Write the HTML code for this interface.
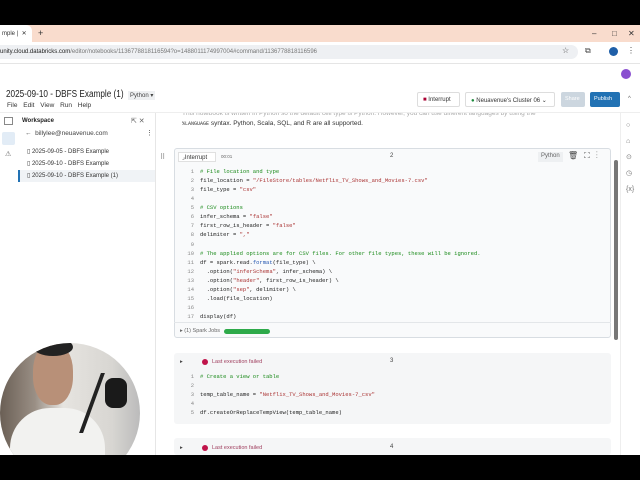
<!DOCTYPE html>
<html><head><style>
*{box-sizing:border-box;margin:0;padding:0}
body{width:640px;height:480px;overflow:hidden;background:#000;font-family:"Liberation Sans",sans-serif;position:relative}
.a{position:absolute;white-space:nowrap}
.code{font-family:"Liberation Mono",monospace;font-size:5.5px;color:#222;white-space:pre}
.ln{color:#888;display:inline-block;width:14px;text-align:right;margin-right:6px}
.c{color:#1a8a1a}.s{color:#a33}.f{color:#2456b0}
</style></head><body>
<div class="a" style="left:0;top:25px;width:640px;height:17px;background:#f9dccd"></div>
<div class="a" style="left:0;top:25px;width:32px;height:17px;background:#fff;border-radius:0 6px 0 0;font-size:6px;padding:5px 2px;color:#333">mple | &nbsp;✕</div>
<div class="a" style="left:38px;top:28px;font-size:9px;color:#333">+</div>
<div class="a" style="left:592px;top:29px;font-size:8px;color:#333">–</div>
<div class="a" style="left:612px;top:29px;font-size:8px;color:#333">□</div>
<div class="a" style="left:628px;top:29px;font-size:8px;color:#333">✕</div>
<div class="a" style="left:0;top:42px;width:640px;height:21px;background:#fff"></div>
<div class="a" style="left:0;top:45px;width:578px;height:14px;background:#eef0f3;border-radius:0 7px 7px 0;font-size:6px;padding:4px 0;color:#777"><span style="color:#222">unity.cloud.databricks.com</span>/editor/notebooks/1136778818116594?o=1488011174997004#command/1136778818116596</div>
<div class="a" style="left:562px;top:46px;font-size:8px;color:#444">☆</div>
<div class="a" style="left:585px;top:46px;font-size:8px;color:#444">⧉</div>
<div class="a" style="left:609px;top:47px;width:9px;height:9px;border-radius:50%;background:#1f5fa8"></div>
<div class="a" style="left:627px;top:46px;font-size:8px;color:#444">⋮</div>
<div class="a" style="left:0;top:63px;width:640px;height:392px;background:#fff"></div>
<div class="a" style="left:0;top:63px;width:640px;height:1px;background:#e5e5e5"></div>
<div class="a" style="left:621px;top:69px;width:10px;height:10px;border-radius:50%;background:#8a4fd0"></div>
<div class="a" style="left:6px;top:89px;font-size:10px;color:#222;transform:scaleX(0.82);transform-origin:left">2025-09-10 - DBFS Example (1)</div>
<div class="a" style="left:128px;top:91px;font-size:6px;color:#444;background:#eef0f2;padding:1px 2px">Python ▾</div>
<div class="a" style="left:7px;top:102px;font-size:6.5px;color:#333;word-spacing:4px">File Edit View Run Help</div>
<div class="a" style="left:417px;top:92px;width:43px;height:15px;border:1px solid #ddd;border-radius:2px;font-size:6px;padding:4px 5px;color:#333"><span style="color:#a03">■</span> Interrupt</div>
<div class="a" style="left:465px;top:92px;width:90px;height:15px;border:1px solid #ddd;border-radius:2px;font-size:6px;padding:4px 5px;color:#333"><span style="color:#1c8a3c">●</span> Neuavenue's Cluster 06 ⌄</div>
<div class="a" style="left:561px;top:92px;width:24px;height:15px;background:#ccd6df;border-radius:2px;font-size:5.5px;padding:4px 4px;color:#fff">Share</div>
<div class="a" style="left:590px;top:92px;width:30px;height:15px;background:#2272b4;border-radius:2px;font-size:5.5px;padding:4px 4px;color:#fff">Publish</div>
<div class="a" style="left:628px;top:96px;font-size:6px;color:#666">^</div>
<div class="a" style="left:0;top:112px;width:640px;height:1px;background:#eee"></div>
<div class="a" style="left:4px;top:117px;width:9px;height:8px;border:1px solid #888"></div>
<div class="a" style="left:2px;top:132px;width:13px;height:13px;background:#e2ecf6;border-radius:2px"></div>
<div class="a" style="left:5px;top:150px;font-size:7px;color:#666">⚠</div>
<div class="a" style="left:22px;top:118px;font-size:6px;color:#222;font-weight:bold">Workspace</div>
<div class="a" style="left:131px;top:117px;font-size:7px;color:#666">⇱ ✕</div>
<div class="a" style="left:25px;top:130px;font-size:6.5px;color:#444">← &nbsp;billylee@neuavenue.com</div>
<div class="a" style="left:146px;top:129px;font-size:7px;color:#444">⋮</div>
<div class="a" style="left:27px;top:148px;font-size:6px;color:#333">▯ 2025-09-05 - DBFS Example</div>
<div class="a" style="left:27px;top:160px;font-size:6px;color:#333">▯ 2025-09-10 - DBFS Example</div>
<div class="a" style="left:18px;top:170px;width:137px;height:12px;background:#f0f3f6;border-left:2px solid #2272b4"></div>
<div class="a" style="left:27px;top:172px;font-size:6px;color:#333">▯ 2025-09-10 - DBFS Example (1)</div>
<div class="a" style="left:155px;top:113px;width:1px;height:342px;background:#e6e6e6"></div>
<div class="a" style="left:156px;top:113px;width:464px;height:6px;overflow:hidden"><div class="a" style="left:26px;top:-3px;font-size:6.5px;color:#aaa">This notebook is written in Python so the default cell type is Python. However, you can use different languages by using the</div></div>
<div class="a" style="left:182px;top:120px;font-size:6.5px;color:#333"><span style="font-family:'Liberation Mono';font-size:5px">%LANGUAGE</span> syntax. Python, Scala, SQL, and R are all supported.</div>
<div class="a" style="left:620px;top:113px;width:20px;height:342px;background:#fff;border-left:1px solid #eee"></div>
<div class="a" style="left:626px;top:118px;font-size:7px;color:#777;line-height:16px;white-space:pre">○
⌂
⊙
◷
{x}</div>
<div class="a" style="left:614px;top:160px;width:4px;height:180px;background:#777;border-radius:2px"></div>
<div class="a" style="left:160px;top:153px;font-size:7px;color:#666">⠿</div>
<div class="a" style="left:174px;top:148px;width:437px;height:190px;border:1px solid #d8dde2;border-radius:3px;background:#f9fafb"></div>
<div class="a" style="left:178px;top:152px;width:38px;height:10px;background:#fff;border:1px solid #e0e0e0;font-size:6px;padding:1px 3px;color:#333">⌟Interrupt</div>
<div class="a" style="left:221px;top:154px;font-size:4.5px;color:#666">00:01</div>
<div class="a" style="left:390px;top:153px;font-size:6px;color:#444">2</div>
<div class="a" style="left:538px;top:152px;width:25px;height:10px;background:#eef0f2;font-size:6px;padding:1px 3px;color:#666">Python</div>
<div class="a" style="left:568px;top:151px;font-size:8px;color:#444;letter-spacing:6px">🗑⛶⋮</div>
<div class="a code" style="left:180px;top:167px;line-height:9.06px"><span class="ln">1</span><span class="c"># File location and type</span>
<span class="ln">2</span>file_location = <span class="s">"/FileStore/tables/Netflix_TV_Shows_and_Movies-7.csv"</span>
<span class="ln">3</span>file_type = <span class="s">"csv"</span>
<span class="ln">4</span>
<span class="ln">5</span><span class="c"># CSV options</span>
<span class="ln">6</span>infer_schema = <span class="s">"false"</span>
<span class="ln">7</span>first_row_is_header = <span class="s">"false"</span>
<span class="ln">8</span>delimiter = <span class="s">","</span>
<span class="ln">9</span>
<span class="ln">10</span><span class="c"># The applied options are for CSV files. For other file types, these will be ignored.</span>
<span class="ln">11</span>df = spark.read.<span class="f">format</span>(file_type) \
<span class="ln">12</span>  .option(<span class="s">"inferSchema"</span>, infer_schema) \
<span class="ln">13</span>  .option(<span class="s">"header"</span>, first_row_is_header) \
<span class="ln">14</span>  .option(<span class="s">"sep"</span>, delimiter) \
<span class="ln">15</span>  .load(file_location)
<span class="ln">16</span>
<span class="ln">17</span>display(df)</div>
<div class="a" style="left:174px;top:322px;width:437px;height:1px;background:#e3e6e9"></div>
<div class="a" style="left:180px;top:328px;font-size:5.5px;color:#666">▸ (1) Spark Jobs</div>
<div class="a" style="left:224px;top:329px;width:46px;height:5px;background:#2eaa4a;border-radius:3px"></div>
<div class="a" style="left:174px;top:353px;width:437px;height:71px;border-radius:3px;background:#f5f6f7"></div>
<div class="a" style="left:180px;top:359px;font-size:5.5px;color:#444">▸</div>
<div class="a" style="left:202px;top:359px;width:6px;height:6px;border-radius:50%;background:#c0134a"></div>
<div class="a" style="left:212px;top:359px;font-size:5.5px;color:#a04060">Last execution failed</div>
<div class="a" style="left:390px;top:358px;font-size:6px;color:#444">3</div>
<div class="a code" style="left:180px;top:372px;line-height:9.1px"><span class="ln">1</span><span class="c"># Create a view or table</span>
<span class="ln">2</span>
<span class="ln">3</span>temp_table_name = <span class="s">"Netflix_TV_Shows_and_Movies-7_csv"</span>
<span class="ln">4</span>
<span class="ln">5</span>df.createOrReplaceTempView(temp_table_name)</div>
<div class="a" style="left:174px;top:438px;width:437px;height:17px;border-radius:3px;background:#f5f6f7"></div>
<div class="a" style="left:180px;top:445px;font-size:5.5px;color:#444">▸</div>
<div class="a" style="left:202px;top:445px;width:6px;height:6px;border-radius:50%;background:#c0134a"></div>
<div class="a" style="left:212px;top:445px;font-size:5.5px;color:#a04060">Last execution failed</div>
<div class="a" style="left:390px;top:444px;font-size:6px;color:#444">4</div>
<div class="a" style="left:0;top:343px;width:140px;height:112px;overflow:hidden">
<div class="a" style="left:0;top:0;width:140px;height:140px;border-radius:50%;overflow:hidden;background:linear-gradient(90deg,#6a5f55 0%,#9a8f85 25%,#e6e4e0 45%,#d8d6d2 80%,#bbb 100%)">
<div class="a" style="left:10px;top:65px;width:95px;height:80px;border-radius:40px 40px 0 0;background:#f2f2f0"></div>
<div class="a" style="left:33px;top:0px;width:40px;height:62px;border-radius:45%;background:#b89078"></div>
<div class="a" style="left:33px;top:-5px;width:40px;height:18px;border-radius:50%;background:#222"></div>
<div class="a" style="left:90px;top:30px;width:40px;height:60px;border-left:4px solid #222;transform:skewX(-20deg)"></div>
<div class="a" style="left:105px;top:35px;width:22px;height:30px;background:#1a1a1a;border-radius:8px"></div>
</div></div>
<div class="a" style="left:0;top:455px;width:640px;height:25px;background:#000"></div>
</body></html>
